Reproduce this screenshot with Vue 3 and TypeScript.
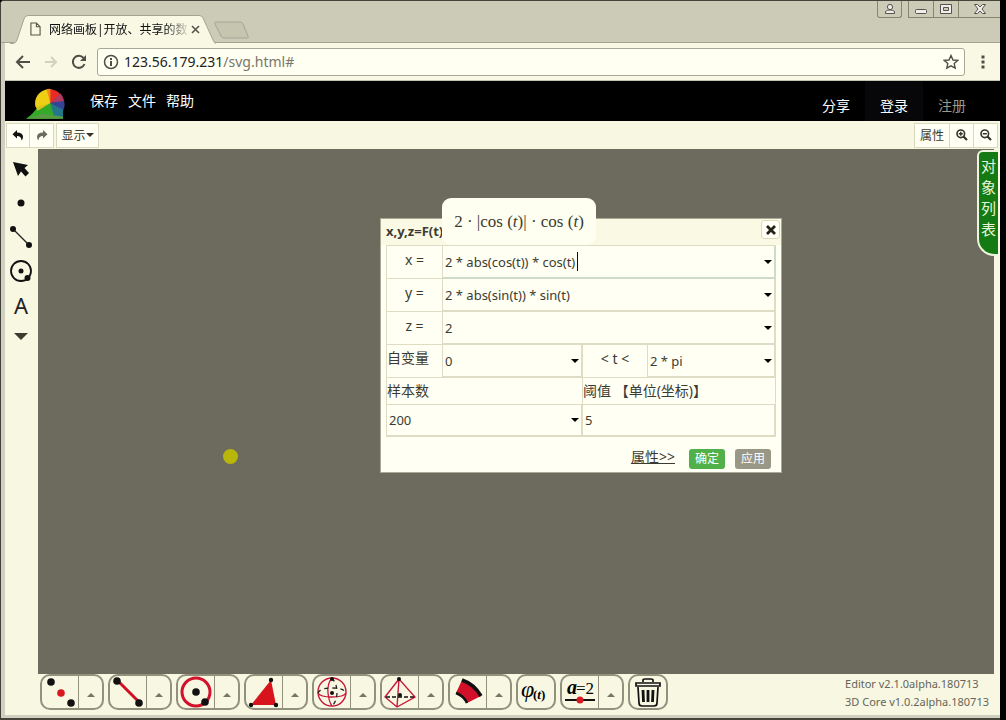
<script setup lang="ts">
import { ref } from 'vue'

interface Shape { id: string; label: string; menu: boolean }

const fields = ref([
  { id: 'fx', label: 'x =', value: '2 * abs(cos(t)) * cos(t)', active: true },
  { id: 'fy', label: 'y =', value: '2 * abs(sin(t)) * sin(t)', active: false },
  { id: 'fz', label: 'z =', value: '2', active: false },
])
const from = ref('0')
const to = ref('2 * pi')
const samples = ref('200')
const threshold = ref('5')
const url = ref('123.56.179.231/svg.html#')

const shapes: Shape[] = [
  { id: 'points', label: '点', menu: true },
  { id: 'segment', label: '线段', menu: true },
  { id: 'circle', label: '圆', menu: true },
  { id: 'polygon', label: '多边形', menu: true },
  { id: 'sphere', label: '球', menu: true },
  { id: 'pyramid', label: '棱锥', menu: true },
  { id: 'sector', label: '曲面', menu: true },
  { id: 'phi', label: '函数', menu: false },
  { id: 'variable', label: '变量', menu: true },
  { id: 'trash', label: '删除', menu: false },
]
</script>

<template>
  <div class="window">
    <div class="frame">
      <header class="tabstrip">
        <div class="tab">
          <svg class="tab-shape" viewBox="0 0 206 29" preserveAspectRatio="none">
            <path d="M0 28.5H3Q6 28 7 25L14 4Q15 .5 18 .5H189Q192 .5 193 3L203 25Q204 28 206 28.5" fill="#f8f8e5" stroke="#a5a493" />
          </svg>
          <svg class="page-icon" viewBox="0 0 12 15"><path d="M1 1H7L11 5V14H1ZM7 1V5H11" fill="none" stroke="#555549" stroke-width="1.2" /></svg>
          <span class="tab-title">网络画板|开放、共享的数</span>
          <button class="plain tab-close" aria-label="关闭标签页"><svg viewBox="0 0 9 9"><path d="M1 1L8 8M8 1L1 8" stroke="#55554c" stroke-width="1.6" /></svg></button>
        </div>
        <button class="plain new-tab" aria-label="新标签页"><svg viewBox="0 0 36 18"><path d="M2 1H26Q28 1 29 3L34 15Q35 17 33 17H10Q8 17 7 15L1 3Q0 1 2 1Z" fill="#c6c5b0" stroke="#a5a493" /></svg></button>
        <div class="win-buttons">
          <button class="plain user" aria-label="用户"><svg viewBox="0 0 12 12"><circle cx="6" cy="4" r="2.6" fill="#eee" stroke="#55544a" /><path d="M1.5 10.5V8.5Q3 7 6 7T10.500 8.500V10.500Z" fill="#eee" stroke="#55544a" /></svg></button>
          <button class="plain" aria-label="最小化"><svg viewBox="0 0 12 12"><rect x=".5" y="6.500" width="11" height="4" rx="1" fill="#eee" stroke="#55544a" /></svg></button>
          <button class="plain" aria-label="最大化"><svg viewBox="0 0 12 12"><path d="M.5 1.500H11.500V10.500H.5ZM3.500 4.500V7.500H8.500V4.500Z" fill="#eee" fill-rule="evenodd" stroke="#55544a" /></svg></button>
          <button class="plain last" aria-label="关闭"><svg viewBox="0 0 12 12"><path d="M.5 1.500H3.500L6 4 8.500 1.500H11.500L8 6 11.500 10.500H8.500L6 8 3.500 10.500H.5L4 6Z" fill="#eee" stroke="#55544a" /></svg></button>
        </div>
      </header>

      <div class="address">
        <button class="plain" aria-label="后退"><svg viewBox="0 0 16 16"><path d="M15 8H2M8 2L2 8L8 14" fill="none" stroke="#4f4f48" stroke-width="2" /></svg></button>
        <button class="plain" aria-label="前进"><svg viewBox="0 0 16 16"><path d="M2 8H13M8 3L13 8L8 13" fill="none" stroke="#d2d1bf" stroke-width="2" /></svg></button>
        <button class="plain" aria-label="刷新"><svg viewBox="0 0 16 16"><path d="M13.500 10A6 6 0 1 1 12.500 4" fill="none" stroke="#4f4f48" stroke-width="2" /><path d="M15 1V7H9Z" fill="#4f4f48" /></svg></button>
        <div class="url">
          <svg class="info" viewBox="0 0 16 16"><circle cx="8" cy="8" r="6.500" fill="none" stroke="#4f4f48" stroke-width="1.5" /><path d="M8 7V12M8 4V6" stroke="#4f4f48" stroke-width="2" /></svg>
          <label class="url-text"><span class="host">123.56.179.231</span><span>/svg.html#</span><input v-model="url" aria-label="地址" type="text"></label>
          <button class="plain star" aria-label="收藏"><svg viewBox="0 0 16 16"><path d="M8 1.500L10 6 14.700 6.400 11.200 9.600 12.200 14.200 8 11.800 3.800 14.200 4.800 9.600 1.300 6.400 6 6Z" fill="none" stroke="#4f4f48" stroke-width="1.4" /></svg></button>
        </div>
        <button class="plain more" aria-label="菜单"><svg viewBox="0 0 16 16"><path d="M6.500 1.500H9.500V4.500H6.500ZM6.500 6.500H9.500V9.500H6.500ZM6.500 11.500H9.500V14.500H6.500Z" fill="#4f4f48" /></svg></button>
      </div>

      <nav class="menubar">
        <svg class="logo" viewBox="0 0 42 32">
          <path d="M1 31Q9 26 15 16L27 15L38 29L34 31Z" fill="#35a928" />
          <path d="M13 23A13.500 13.500 0 0 1 13 8L26 15Z" fill="#d9c51b" />
          <path d="M26 15L11 19A14 14 0 0 1 24 1Z" fill="#efcf16" />
          <path d="M26 15L22 1Q25 0 27 1L31 10Z" fill="#f18c16" />
          <path d="M26 15L26 1A14 14 0 0 1 36 6Z" fill="#e92c21" />
          <path d="M26 15L36 5A14 14 0 0 1 40 14Z" fill="#b13a63" />
          <path d="M26 15L40 13A14 14 0 0 1 39 23Z" fill="#344497" />
          <path d="M26 15L39 22V31L30 30Z" fill="#24778a" />
          <path d="M1 31Q10 29 18 26L39 29V31Z" fill="#579c42" />
        </svg>
        <div class="menu-left"><a href="#">保存</a><a href="#">文件</a><a href="#">帮助</a></div>
        <div class="menu-right"><a href="#">分享</a><a href="#" class="login">登录</a><a href="#" class="register">注册</a></div>
      </nav>

      <div class="toolbar">
        <button aria-label="撤销"><svg viewBox="0 0 12 12"><path d="M5 1V3.500C9 3.500 11 5 11 8Q11 10 9.500 11.500Q9.500 7 5 7V9.500L.5 5.300Z" fill="#111" /></svg></button>
        <button aria-label="重做"><svg viewBox="0 0 12 12"><path d="M7 1V3.500C3 3.500 1 5 1 8Q1 10 2.500 11.500Q2.500 7 7 7V9.500L11.500 5.300Z" fill="#6d6c60" /></svg></button>
        <button class="show">显示<i class="caret-down"></i></button>
        <div class="grow"></div>
        <button class="prop">属性</button>
        <button aria-label="放大"><svg viewBox="0 0 12 12"><circle cx="4.800" cy="4.800" r="3.800" fill="none" stroke="#33332b" stroke-width="1.6" /><path d="M7.500 7.500L11 11" stroke="#33332b" stroke-width="2.200" /><path d="M2.800 4.800H6.800M4.800 2.800V6.800" stroke="#33332b" stroke-width="1.400" /></svg></button>
        <button aria-label="缩小"><svg viewBox="0 0 12 12"><circle cx="4.800" cy="4.800" r="3.800" fill="none" stroke="#33332b" stroke-width="1.600" /><path d="M7.500 7.500L11 11" stroke="#33332b" stroke-width="2.200" /><path d="M2.800 4.800H6.800" stroke="#33332b" stroke-width="1.400" /></svg></button>
      </div>

      <main class="workspace">
        <aside class="rail">
          <button class="plain" aria-label="选择"><svg viewBox="0 0 24 24"><path d="M4 5L19 8L15.500 11L20 16L16.500 19.500L12 14.500L9 19Z" fill="#111" /></svg></button>
          <button class="plain" aria-label="点"><svg viewBox="0 0 24 24"><circle cx="12" cy="12" r="3.500" fill="#111" /></svg></button>
          <button class="plain" aria-label="线段"><svg viewBox="0 0 24 24"><path d="M4 4L20 20" stroke="#222" stroke-width="1.300" /><circle cx="4" cy="4" r="3" fill="#111" /><circle cx="20" cy="20" r="3" fill="#111" /></svg></button>
          <button class="plain" aria-label="圆"><svg viewBox="0 0 24 24"><circle cx="12" cy="12" r="10" fill="none" stroke="#111" stroke-width="1.800" /><circle cx="12" cy="12" r="2.500" fill="#111" /><circle cx="18.500" cy="19" r="3" fill="#111" /></svg></button>
          <button class="plain letter" aria-label="文字">A</button>
          <button class="plain" aria-label="更多"><svg viewBox="0 0 24 24"><path d="M5 6H19L12 13Z" fill="#3c3b2d" /></svg></button>
        </aside>

        <section class="canvas">
          <i class="pointer"></i>
          <form class="dialog" @submit.prevent>
            <div class="dialog-head"><strong>x,y,z=F(t)</strong><button type="button" aria-label="关闭"><svg viewBox="0 0 10 10"><path d="M1 1L9 9M9 1L1 9" stroke="#222219" stroke-width="2.800" /></svg></button></div>
            <div class="grid">
              <template v-for="f in fields" :key="f.id">
                <label class="eq" :for="f.id">{{ f.label }}</label>
                <div class="combo wide" :class="{ active: f.active }"><input :id="f.id" v-model="f.value" type="text"><i v-if="f.active" class="text-caret"></i><button type="button" class="plain" aria-label="展开"><i class="arrow"></i></button></div>
              </template>
              <label class="cn" for="from">自变量</label>
              <div class="combo"><input id="from" v-model="from" type="text"><button type="button" class="plain" aria-label="展开"><i class="arrow"></i></button></div>
              <label class="eq" for="to">&lt; t &lt;</label>
              <div class="combo"><input id="to" v-model="to" type="text"><button type="button" class="plain" aria-label="展开"><i class="arrow"></i></button></div>
              <label class="cn half" for="samples">样本数</label>
              <label class="cn half" for="threshold">阈值 【单位(坐标)】</label>
              <div class="combo half"><input id="samples" v-model="samples" type="text"><button type="button" class="plain" aria-label="展开"><i class="arrow"></i></button></div>
              <div class="combo half"><input id="threshold" v-model="threshold" type="text"></div>
            </div>
            <div class="dialog-foot"><a href="#">属性&gt;&gt;</a><button type="submit" class="ok">确定</button><button type="button" class="apply">应用</button></div>
            <div class="formula">2 · |cos (<em>t</em>)| · cos (<em>t</em>)</div>
          </form>
          <button class="objects">对<br>象<br>列<br>表</button>
        </section>
        <div class="edge"></div>
      </main>

      <footer class="shapes">
        <div v-for="s in shapes" :key="s.id" class="shape">
          <button class="plain draw" :aria-label="s.label">
            <svg viewBox="0 0 36 34">
              <template v-if="s.id === 'points'"><circle cx="9" cy="7" r="3.800" fill="#111" /><circle cx="19" cy="18" r="3.800" fill="#d71920" /><circle cx="29" cy="28" r="3.800" fill="#111" /></template>
              <template v-else-if="s.id === 'segment'"><path d="M7 5L30 28" stroke="#cf1022" stroke-width="3" /><circle cx="7" cy="6" r="3.800" fill="#111" /><circle cx="29" cy="28" r="3.800" fill="#111" /></template>
              <template v-else-if="s.id === 'circle'"><circle cx="18" cy="17" r="14" fill="none" stroke="#d0132b" stroke-width="3" /><circle cx="18" cy="17" r="3.800" fill="#111" /><circle cx="27" cy="27" r="3.800" fill="#111" /></template>
              <template v-else-if="s.id === 'polygon'"><path d="M25 5L30 30H5Z" fill="#d7141b" /><circle cx="25" cy="5" r="2.200" fill="#111" /><circle cx="30" cy="30" r="2.200" fill="#111" /><circle cx="5" cy="30" r="2.200" fill="#111" /></template>
              <template v-else-if="s.id === 'sphere'"><circle cx="18" cy="17" r="14" fill="none" stroke="#c8193c" stroke-width="1.400" /><path d="M4 18Q6 22 18 22T32 18M18 3Q13 9 14 18T18 31" fill="none" stroke="#c8193c" stroke-width="1.300" /><path d="M4 18Q6 13 18 13T32 18M18 3Q23 9 23 17T19 30" fill="none" stroke="#222" stroke-width="1.300" stroke-dasharray="4 4" /><circle cx="18" cy="4" r="2" fill="#111" /><circle cx="18" cy="18" r="2" fill="#111" /></template>
              <template v-else-if="s.id === 'pyramid'"><path d="M17 4L3 22L15 32L33 22ZM17 4L15 32" fill="none" stroke="#c8193c" stroke-width="1.400" /><path d="M4 22H32" stroke="#111" stroke-width="1.500" stroke-dasharray="4 2" /><circle cx="17" cy="4" r="2" fill="#111" /><circle cx="18" cy="20" r="2" fill="#111" /></template>
              <template v-else-if="s.id === 'sector'"><path d="M12 5Q24 9 31 21L17 28Q14 21 6 18Z" fill="#d2102a" /><path d="M12 5Q24 9 31 21" fill="none" stroke="#111" stroke-width="3.500" /><path d="M6 18Q14 21 17 28" fill="none" stroke="#111" stroke-width="2.500" /></template>
              <template v-else-if="s.id === 'phi'"><text x="3" y="22" class="phi">φ</text><text x="15" y="24" class="sub">(<tspan class="it">t</tspan>)</text></template>
              <template v-else-if="s.id === 'variable'"><text x="5" y="19" class="var">a</text><text x="14" y="19" class="val">=2</text><path d="M3 25H33" stroke="#111" stroke-width="2.200" /><circle cx="18" cy="25" r="3.500" fill="#d71920" /></template>
              <template v-else><path d="M13 7V5Q13 4 15 4H21Q23 4 23 5V7M6 11V8H30V11ZM8 12L9 28Q9 31 12 31H24Q27 31 27 28L28 12" fill="none" stroke="#111" stroke-width="1.700" /><path d="M13 15L13.500 27M18 15V27M23 15L22.500 27" stroke="#111" stroke-width="2.800" /></template>
            </svg>
          </button>
          <button v-if="s.menu" class="plain up" :aria-label="s.label + '菜单'"><i></i></button>
        </div>
        <div class="version"><div>Editor v2.1.0alpha.180713</div><div>3D Core v1.0.2alpha.180713</div></div>
      </footer>
    </div>
  </div>
</template>

<style>
body { margin: 0; background: #000; }
</style>

<style scoped>
* { box-sizing: border-box; }
.window { height: 100vh; padding-right: 6px; background: #000; font-family: "Noto Sans", "Noto Sans CJK SC", sans-serif; font-size: 14px; color: #3c3b32; }
.frame { display: flex; flex-direction: column; height: 100%; border: 1px solid #45443a; border-width: 1px 0 2px 1px; border-radius: 4px 0 0 0; background: #d0cfc0; padding: 0 0 3px 4px; overflow: hidden; }
button { font: inherit; cursor: pointer; color: inherit; padding: 0; }
button svg, .info { display: block; }
.plain { border: 0; background: none; }
a { color: inherit; text-decoration: none; }
.grow { flex: 1; }

.tabstrip { height: 42px; flex: none; display: flex; align-items: flex-end; margin-left: -4px; padding-left: 9px; background: #cccbb8; border-bottom: 1px solid #a5a493; }
.tab { position: relative; display: flex; align-items: center; width: 206px; height: 28px; margin-bottom: -1px; padding: 0 16px 0 20px; }
.tab-shape { position: absolute; inset: 0; width: 100%; height: 29px; }
.page-icon { position: relative; width: 11px; height: 14px; flex: none; }
.tab-title { position: relative; flex: 1; margin-left: 8px; white-space: nowrap; font-size: 12px; color: #111; -webkit-mask-image: linear-gradient(90deg, #000 82%, transparent); mask-image: linear-gradient(90deg, #000 82%, transparent); }
.tab-close { position: relative; width: 9px; height: 9px; }
.new-tab { width: 36px; height: 18px; margin-bottom: 3px; margin-left: -2px; }
.win-buttons { display: flex; align-self: flex-start; margin-left: auto; }
.win-buttons button { display: grid; place-items: center; width: 25px; height: 17px; border: 1px solid #86856f; border-width: 0 0 1px 1px; }
.win-buttons svg { width: 12px; height: 12px; }
.win-buttons .user { margin-right: 6px; border-right-width: 1px; border-radius: 0 0 3px 3px; }
.win-buttons .last { width: 42px; }

.address { height: 38px; flex: none; display: flex; align-items: center; gap: 12px; padding: 0 9px 0 10px; background: #f8f8e5; border-bottom: 1px solid #c5c5b4; }
.address > button svg { width: 16px; height: 16px; }
.url { flex: 1; display: flex; align-items: center; gap: 5px; height: 28px; margin-left: -2px; padding: 0 5px; border: 1px solid #a9a897; border-radius: 3px; background: #fffff2; }
.info, .star svg { width: 16px; height: 16px; }
.url-text { position: relative; flex: 1; line-height: 24px; color: #77766b; }
.url-text input { position: absolute; inset: 0; width: 100%; border: 0; padding: 0; background: none; color: transparent; font: inherit; outline: 0; }
.host { color: #222; }
.more { margin-left: -2px; }

.menubar { height: 40px; flex: none; display: flex; align-items: center; background: #000; color: #fff; }
.logo { width: 41px; height: 32px; margin: 6px 24px 0 20px; }
.menu-left { display: flex; gap: 10px; padding-bottom: 2px; }
.menu-right { display: flex; margin-left: auto; padding-right: 19px; align-self: stretch; }
.menu-right a { width: 58px; line-height: 50px; text-align: center; overflow: hidden; }
.menu-right .login { background: #07070a; }
.menu-right .register { color: #9a998b; }

.toolbar { height: 28px; flex: none; display: flex; align-items: center; padding: 0 2px 0 1px; background: #f7f7e2; }
.toolbar button { display: grid; place-items: center; width: 24px; height: 25px; border: 1px solid #d9d9bf; border-left-width: 0; background: #fffff4; font-size: 12px; }
.toolbar button svg { width: 12px; height: 12px; }
.toolbar button:first-child { border-left-width: 1px; }
.toolbar .show { display: flex; align-items: center; justify-content: center; width: 43px; margin-left: 2px; border-left-width: 1px; }
.toolbar .prop { width: 36px; border-left-width: 1px; }
.caret-down { border: 4px solid transparent; border-top-color: #33332b; border-bottom: 0; }

.workspace { flex: 1; display: flex; min-height: 0; }
.rail { width: 33px; flex: none; display: flex; flex-direction: column; align-items: center; padding: 8px 1px 0 0; gap: 10px; background: #f7f7e2; }
.rail button { width: 24px; height: 24px; }
.rail .letter { font-size: 22px; line-height: 24px; color: #222; }
.canvas { position: relative; flex: 1; background: #6c6b5d; }
.edge { width: 6px; background: #f7f7e2; }
.pointer { position: absolute; left: 185px; top: 300px; width: 15px; height: 15px; border-radius: 50%; background: #b9b60b; }
.objects { position: absolute; right: -4px; top: 1px; width: 21px; height: 106px; border: 2px solid #edf5dc; border-right: 0; border-radius: 6px 0 0 17px; background: #147a13; color: #e9f4d9; font-size: 15px; line-height: 21px; padding-bottom: 10px; }

.dialog { position: absolute; left: 342px; top: 69px; width: 402px; background: #fffff3; border: 1px solid #aaa995; padding: 0 5px; }
.dialog-head { display: flex; justify-content: space-between; height: 26px; margin: 0 -5px; padding: 1px 1px 0 5px; background: #f9f9e4; font-size: 13px; line-height: 22px; }
.dialog-head button { display: grid; place-items: center; width: 19px; height: 19px; border: 1px solid #dadabd; border-radius: 3px; background: #fffff5; }
.dialog-head svg { width: 10px; height: 10px; }
.grid { display: grid; grid-template-columns: 56px 140px 65px 1fr; grid-template-rows: repeat(4, 33px) 27px 32px; border: 1px solid #deddc4; border-width: 1px 0 0 1px; }
.grid > * { border: 1px solid #deddc4; border-width: 0 1px 1px 0; }
.eq { text-align: center; line-height: 28px; font-size: 14px; }
.cn { line-height: 26px; white-space: nowrap; }
.half { grid-column: span 2; }
.wide { grid-column: span 3; }
.combo { position: relative; display: flex; min-width: 0; }
.grid > .combo { border-width: 0 2px 2px 0; box-shadow: -1px 0 #deddc4; }
.combo input { flex: 1; width: 0; min-width: 0; border: 0; padding: 0 2px; background: none; color: inherit; outline: 0; font: inherit; font-size: 13px; }
.combo button { width: 12px; }
.grid > .active { border-color: #cddbc8; }
.arrow { display: block; margin: 0 auto; width: 0; border: 4px solid transparent; border-top-color: #000; border-bottom: 0; }
.text-caret { position: absolute; left: 134px; top: 6px; width: 1px; height: 19px; background: #111; }
.dialog-foot { display: flex; justify-content: flex-end; align-items: center; height: 35px; padding: 8px 5px 0 0; gap: 10px; }
.dialog-foot a { text-decoration: underline; margin-right: 4px; line-height: 20px; margin-top: -4px; }
.dialog-foot button { width: 36px; height: 20px; border: 0; border-radius: 3px; color: #fff; font-size: 12px; line-height: 20px; background: #999886; }
.dialog-foot .ok { background: #50b04a; }
.formula { position: absolute; left: 61px; top: -21px; width: 154px; height: 47px; border-radius: 9px; background: #fffff1; text-align: center; line-height: 47px; font-family: "Liberation Serif", serif; font-size: 17px; white-space: nowrap; }

.shapes { height: 41px; flex: none; display: flex; gap: 4px; padding-left: 35px; background: #f7f7e2; }
.shape { display: flex; height: 36px; border: 2px solid #92917e; border-radius: 10px; overflow: hidden; flex: none; }
.draw { width: 36px; height: 32px; }
.draw svg { width: 36px; height: 34px; margin-top: -1px; }
.up { width: 24px; border-left: 1px solid #92917e; }
.up i { display: block; width: 0; margin: 6px auto 0; border: 4px solid transparent; border-top: 0; border-bottom-color: #77765e; }
.phi { font: italic 24px "Liberation Serif", serif; }
.sub { font: bold 13px "Liberation Serif", serif; }
.it { font-style: italic; }
.var { font: italic bold 20px "Liberation Serif", serif; }
.val { font: 17px "Liberation Serif", serif; }
.version { margin-left: auto; padding-right: 11px; font-size: 11px; line-height: 18px; padding-top: 1px; color: #66655a; white-space: nowrap; }
</style>
